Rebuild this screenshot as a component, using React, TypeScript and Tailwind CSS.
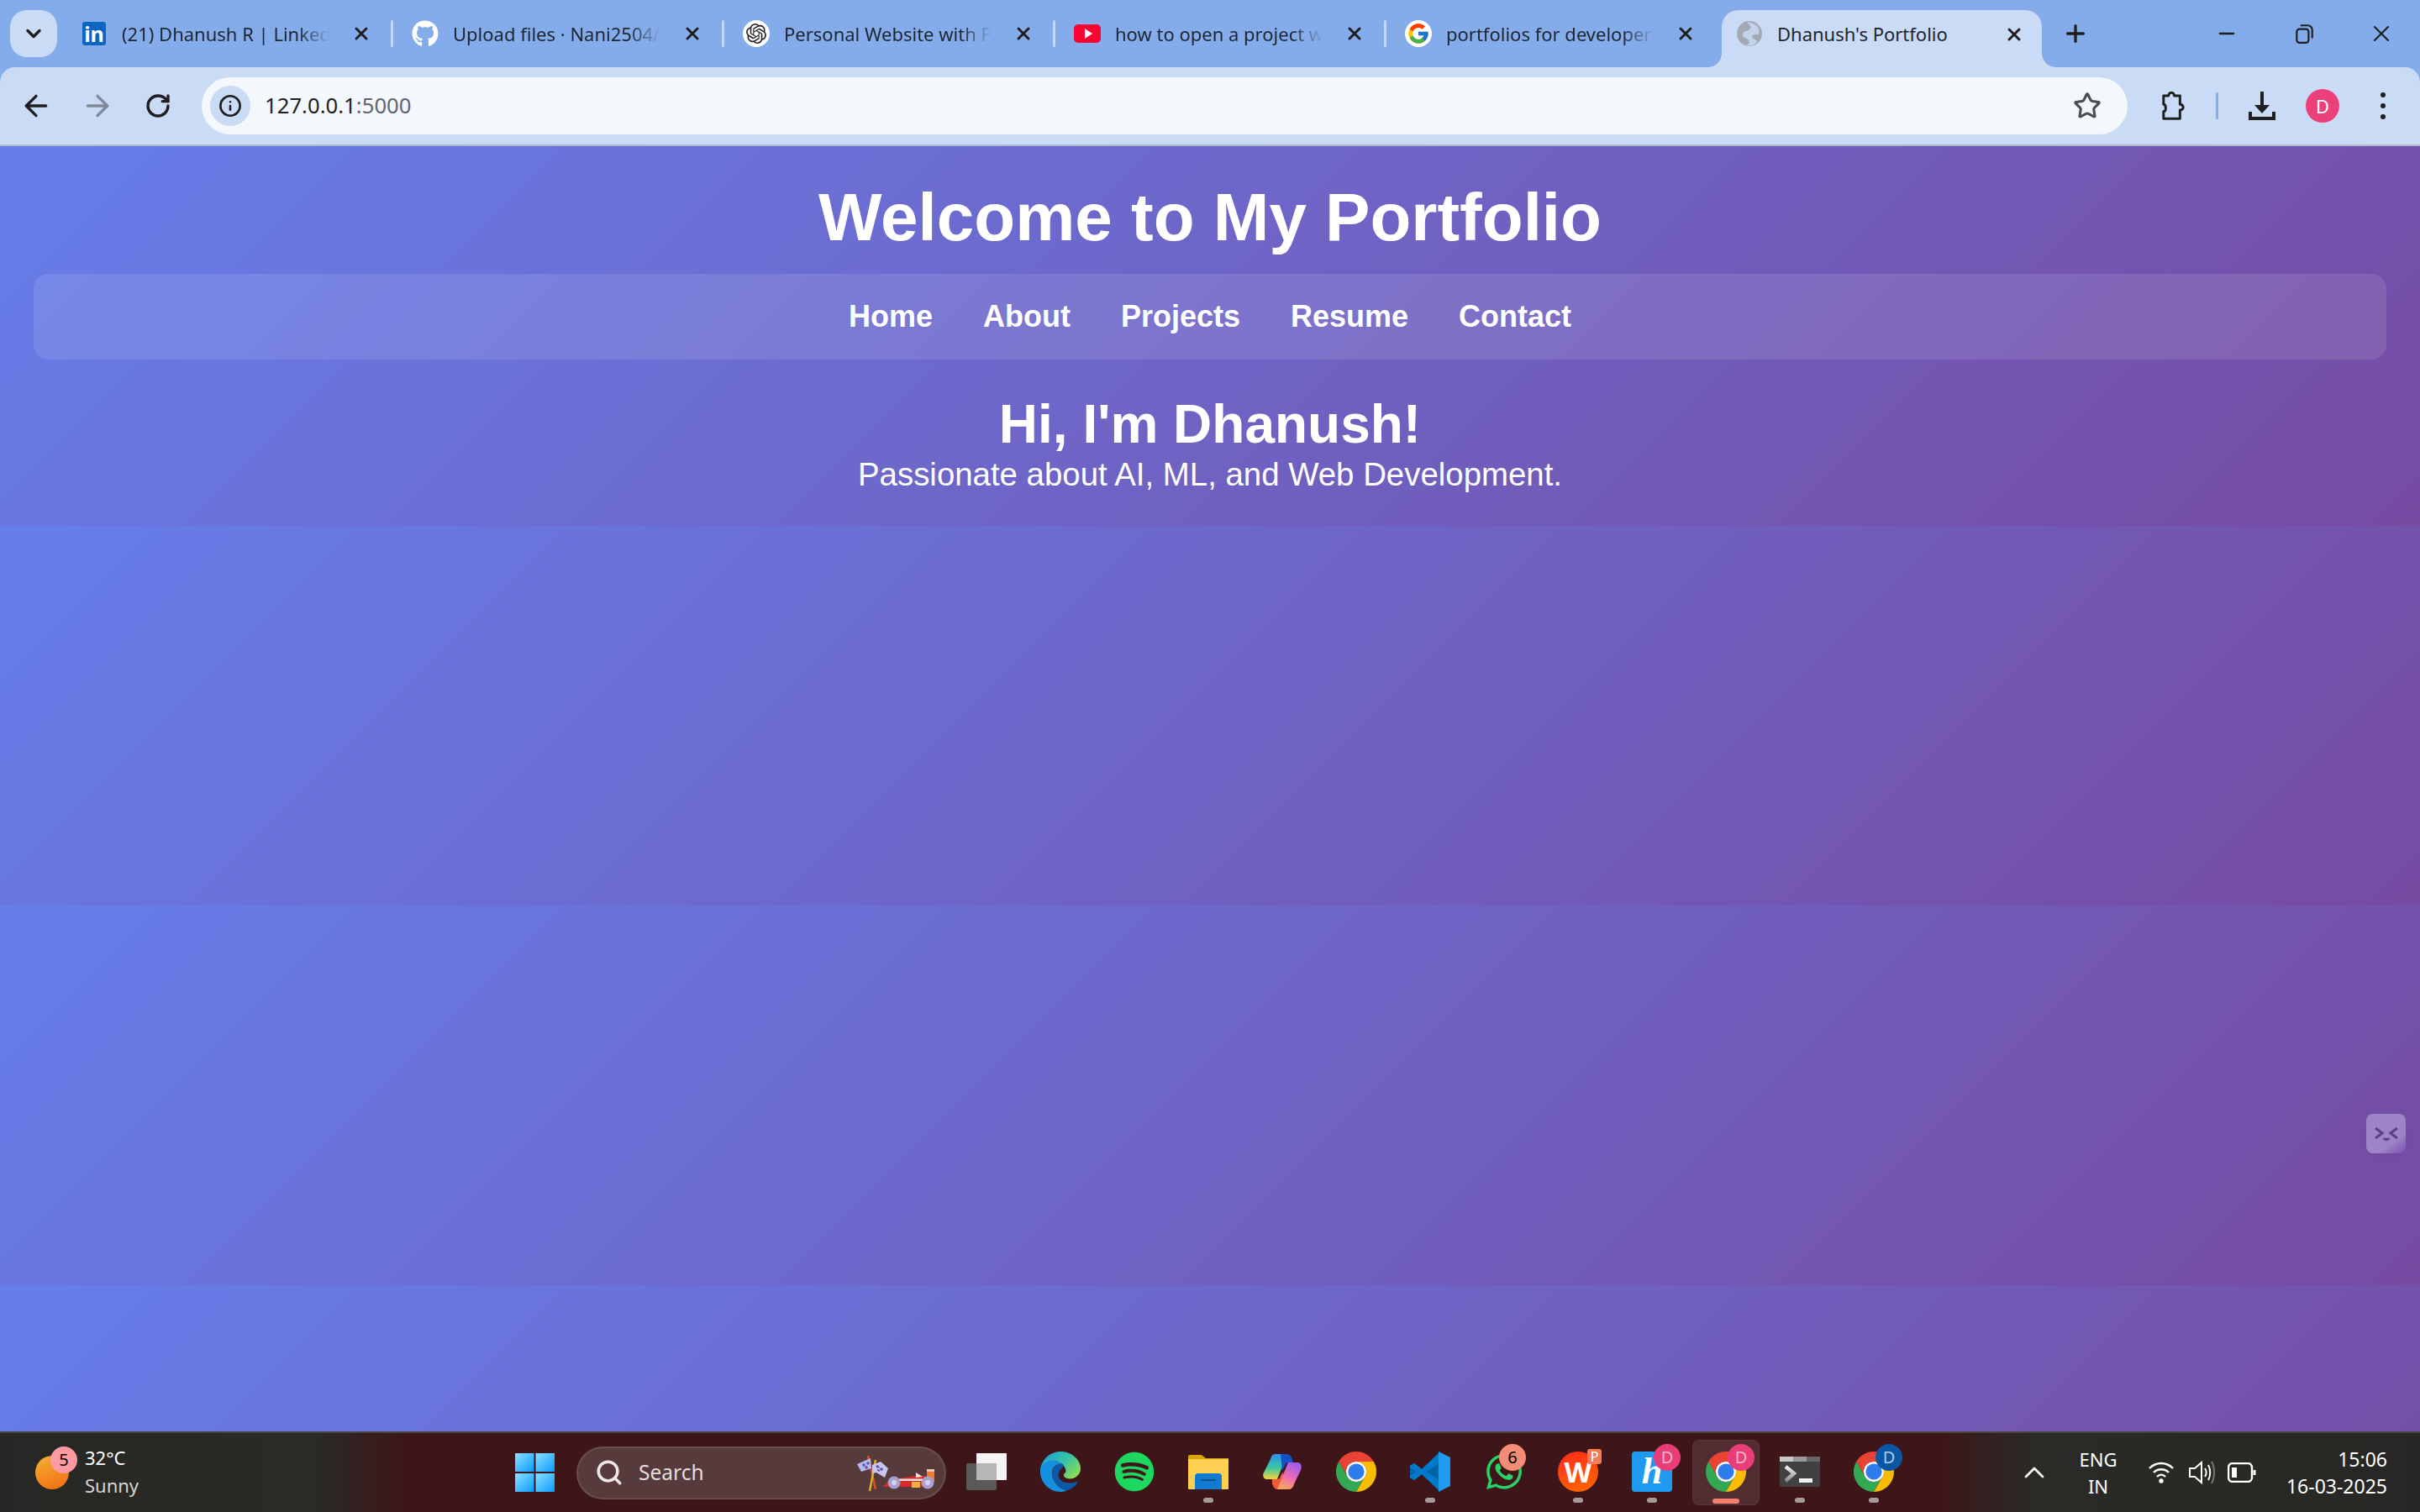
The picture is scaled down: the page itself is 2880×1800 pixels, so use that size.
import type { ReactNode } from 'react';
import { ArrowLeft, ArrowRight, ChevronDown, ChevronUp, Info, Minus, Plus, RotateCw, Search, Star, X } from 'lucide-react';
import { FaGithub, FaSpotify, FaWhatsapp } from 'react-icons/fa';
import { FcGoogle } from 'react-icons/fc';
import { SiOpenai } from 'react-icons/si';

const navLinks = ['Home', 'About', 'Projects', 'Resume', 'Contact'];

function ChromeIcon() {
  return (
    <svg viewBox="4 4 40 40" className="h-12 w-12">
      <path fill="#EA4335" d="M6.68 14A20 20 0 0 1 41.32 14H24A10 10 0 0 0 15.34 29Z" />
      <path fill="#34A853" d="M6.68 14L15.34 29A10 10 0 0 0 32.66 29L24 44A20 20 0 0 1 6.68 14Z" />
      <path fill="#FBBC04" d="M41.32 14H24A10 10 0 0 1 32.66 29L24 44A20 20 0 0 0 41.32 14Z" />
      <circle cx="24" cy="24" r="10" fill="#fff" />
      <circle cx="24" cy="24" r="8" fill="#2F7CEE" />
    </svg>
  );
}

function EdgeIcon() {
  return (
    <svg viewBox="0 0 48 48" className="h-12 w-12">
      <defs>
        <linearGradient id="edge-top" x1="0" y1="0" x2="1" y2="0.7">
          <stop offset="0" stopColor="#1B9DE2" />
          <stop offset="0.55" stopColor="#35C1A8" />
          <stop offset="1" stopColor="#8ADB55" />
        </linearGradient>
      </defs>
      <path fill="url(#edge-top)" d="M0 20C4 6 14 0 24 0C38 0 48 10 48 20C48 30 38 34 32 32C27 31 27 27 30 25C32 22 28 13 17 11C8 11 2 16 0 20Z" />
      <path fill="#1590DE" d="M0 20C2 14 9 10 17 11C24 12 27 15 27 15C19 13 13 20 14 27C15 38 25 46 32 46C28 48 26 48 24 48C10 48 0 36 0 24Z" />
      <path fill="#0C5AA6" d="M27 15C19 13 14 20 14 27C15 38 26 46 32 46C38 45 43 40 45 35C40 38 35 38 30 37C22 35 20 28 23 23C25 20 29 18 27 15Z" />
    </svg>
  );
}

function ExplorerIcon() {
  return (
    <svg viewBox="0 0 48 42" className="h-[42px] w-12">
      <path fill="#D9A300" d="M0 3a2 2 0 0 1 2-2h14l5 4h27v6H0Z" />
      <path fill="#FFD052" d="M0 6h48v35a1 1 0 0 1-1 1H1a1 1 0 0 1-1-1Z" />
      <path fill="#0F7BD1" d="M8 27a4 4 0 0 1 4-4h24a4 4 0 0 1 4 4v15H8Z" />
      <rect x="15" y="30" width="18" height="2" fill="#0A4E8C" />
    </svg>
  );
}

function CopilotIcon() {
  return (
    <svg viewBox="0 0 48 46" className="h-[46px] w-12">
      <defs>
        <linearGradient id="cop-a" x1="0" y1="0" x2="0" y2="1">
          <stop offset="0" stopColor="#2A8DF0" />
          <stop offset="0.55" stopColor="#3CC7A4" />
          <stop offset="1" stopColor="#F7D33A" />
        </linearGradient>
        <linearGradient id="cop-b" x1="0.7" y1="0" x2="0.3" y2="1">
          <stop offset="0" stopColor="#9B5CF0" />
          <stop offset="0.55" stopColor="#EE6DB4" />
          <stop offset="1" stopColor="#F9A65A" />
        </linearGradient>
      </defs>
      <path fill="url(#cop-a)" d="M15 2H30L18 32H6C2 32 0 28 2 24L10 8C11 4 13 2 15 2Z" />
      <path fill="#1450C8" d="M22 2H29C33 2 35 5 36 9L37 12H32C29 12 28 13 27 16L24 22Z" />
      <path fill="#F05A3A" d="M12 32H18C20 32 21 31 22 28L25 23L26 44H18C15 44 13 41 12 37Z" />
      <path fill="url(#cop-b)" d="M31 12H42C46 12 48 16 46 21L38 38C37 42 34 44 32 44H18Z" />
    </svg>
  );
}

function VsCodeIcon() {
  return (
    <svg viewBox="0 0 48 48" className="h-12 w-12">
      <path fill="#0065A9" d="M34 2 14 21 5 14l-5 3v14l5 3 9-7 20 19 3-4V5Z" />
      <path fill="#007ACC" d="M34 2v12L20 24l14 10v12L14 27l-9 7-5-3v-2l8-5-8-5v-2l5-3 9 7Z" />
      <path fill="#1F9CF0" d="M34 0l14 7v34l-14 7Z" />
      <path fill="#0065A9" d="M34 14 20 24l14 10Z" opacity="0.55" />
    </svg>
  );
}

function TerminalIcon() {
  return (
    <svg viewBox="0 0 48 36" className="h-9 w-12">
      <defs>
        <linearGradient id="term-arrow" x1="0" y1="0" x2="0" y2="1">
          <stop offset="0" stopColor="#F0F0F0" />
          <stop offset="1" stopColor="#8C8C8C" />
        </linearGradient>
      </defs>
      <rect width="48" height="36" rx="1" fill="#414141" />
      <rect width="16" height="6" fill="#C8C8C8" />
      <rect x="16" width="16" height="6" fill="#9A9A9A" />
      <rect x="32" width="16" height="6" fill="#666" />
      <path d="M7 12 17 20 7 29" fill="none" stroke="url(#term-arrow)" strokeWidth="4.5" />
      <rect x="23" y="26" width="16" height="5" fill="#F0F0F0" />
    </svg>
  );
}

function RaceCar() {
  return (
    <svg viewBox="0 0 94 48" className="h-12 w-[94px]">
      <path d="M13 4 22 44" stroke="#E0501C" strokeWidth="2.5" fill="none" />
      <path d="M22 9 15 46" stroke="#E3AE22" strokeWidth="2.5" fill="none" />
      <path fill="#B9B9EE" d="M16 7 0 14 5 23 17 19Z" />
      <path fill="#C6C6F0" d="M18 15 28 11 37 19 33 30 23 24 18 25Z" />
      <path fill="#5B5BA8" d="M6 14l3-1 1 3-3 1Zm5-2 3-1 1 3-3 1Zm-2 5 3-1 1 3-3 1ZM22 16l3-1 2 3-3 1Zm5 3 3-1 1 3-3 1Zm-3 1 3 1 0 2-3-1Z" />
      <path fill="#D92A2A" d="M30 41 40 33 68 28 82 28 83 41Z" />
      <path fill="#F4E3E3" d="M50 31.5H80V34H50ZM70 24l8 5-8 1Z" />
      <rect x="65" y="35" width="10" height="7" fill="#F2B33E" />
      <rect x="83" y="20" width="9" height="3" fill="#E7C9B0" />
      <rect x="83" y="23" width="9" height="12" fill="#F0792E" />
      <circle cx="44" cy="36" r="7.5" fill="#A7A1D0" />
      <circle cx="44" cy="36" r="3" fill="#D7D3EC" />
      <circle cx="84" cy="36" r="7.5" fill="#A7A1D0" />
      <circle cx="84" cy="36" r="3" fill="#D7D3EC" />
    </svg>
  );
}

function Tab({ icon, title }: { icon: ReactNode; title: string }) {
  return (
    <div className="flex h-14 w-[394px] shrink-0 items-center pl-[22px]">
      <div className="flex w-8 justify-center">{icon}</div>
      <span className="ml-[17px] w-[247px] overflow-hidden whitespace-nowrap text-[22px] text-[#1f2530] [mask-image:linear-gradient(to_right,black_85%,transparent_100%)]">
        {title}
      </span>
      <X className="ml-[26px] h-6 w-6 text-[#1f1f1f]" strokeWidth={3} />
      {title.startsWith('portfolios') ? null : <div className="ml-auto h-8 w-[3px] rounded-full bg-[#C6D8F5]" />}
    </div>
  );
}

function TabStrip() {
  return (
    <div className="flex h-20 items-start pt-3 pl-3">
      <button className="flex h-14 w-14 items-center justify-center rounded-[20px] bg-[#CADBF6]">
        <ChevronDown className="h-7 w-7 text-[#1f1f1f]" strokeWidth={3} />
      </button>
      <div className="ml-[6px] flex">
        <Tab
          title="(21) Dhanush R | LinkedIn"
          icon={<div className="flex h-7 w-7 items-center justify-center rounded-[3px] bg-[#0A66C2] text-[25px] leading-none font-bold text-white">in</div>}
        />
        <Tab title="Upload files · Nani2504/portfolio" icon={<FaGithub className="h-8 w-8 text-white" />} />
        <Tab
          title="Personal Website with Flask"
          icon={
            <div className="flex h-8 w-8 items-center justify-center rounded-full bg-white">
              <SiOpenai className="h-6 w-6 text-[#222]" />
            </div>
          }
        />
        <Tab
          title="how to open a project with vs code"
          icon={
            <div className="flex h-[22px] w-8 items-center justify-center rounded-[5px] bg-[#FF0033]">
              <div className="ml-[2px] h-0 w-0 border-y-[6px] border-l-[9px] border-y-transparent border-l-white" />
            </div>
          }
        />
        <Tab
          title="portfolios for developers - Google"
          icon={
            <div className="flex h-8 w-8 items-center justify-center rounded-full bg-white">
              <FcGoogle className="h-7 w-7" />
            </div>
          }
        />
      </div>
      <div className="relative ml-[5px] flex h-[68px] w-[381px] shrink-0 items-start rounded-t-[20px] bg-[#CADBF6] pl-[18px]">
        <span className="absolute bottom-0 -left-4 h-4 w-4 bg-[radial-gradient(circle_at_0_0,#84ACEA_15.5px,#CADBF6_16px)]" />
        <span className="absolute -right-4 bottom-0 h-4 w-4 bg-[radial-gradient(circle_at_100%_0,#84ACEA_15.5px,#CADBF6_16px)]" />
        <div className="flex h-14 items-center">
          <svg viewBox="0 0 30 30" className="h-[30px] w-[30px]">
            <circle cx="15" cy="15" r="15" fill="#A3A9B3" />
            <path fill="#CADBF6" d="M12 2c4 3 6 5 3 8s-8 1-8 6 5 3 7 7-1 5-3 6c5 1 10 0 13-4 0-3-5-3-6-6s5-4 8-3c2-5-1-11-7-13-3-1-5-2-7-1Z" opacity="0.85" />
          </svg>
          <span className="ml-[18px] text-[22px] whitespace-nowrap text-[#1f2530]">Dhanush's Portfolio</span>
        </div>
        <X className="absolute top-[17px] right-[21px] h-6 w-6 text-[#1f1f1f]" strokeWidth={3} />
      </div>
      <div className="ml-5 flex h-14 w-10 items-center justify-center">
        <Plus className="h-8 w-8 text-[#1f1f1f]" strokeWidth={2.5} />
      </div>
      <div className="ml-auto flex h-14 items-center">
        <div className="flex w-[92px] justify-center">
          <Minus className="h-7 w-7 text-[#1f1f1f]" strokeWidth={2} />
        </div>
        <div className="flex w-[92px] justify-center">
          <svg viewBox="0 0 24 24" className="h-[26px] w-[26px]" fill="none" stroke="#1f1f1f" strokeWidth="2">
            <rect x="4" y="7" width="13" height="15" rx="3" />
            <path d="M8 3h8a5 5 0 0 1 5 5v9" />
          </svg>
        </div>
        <div className="flex w-[92px] justify-center">
          <X className="h-8 w-8 text-[#1f1f1f]" strokeWidth={1.6} />
        </div>
      </div>
    </div>
  );
}

function Toolbar() {
  return (
    <div className="flex h-[94px] items-start rounded-t-[18px] border-b-2 border-[#ABB8CE] bg-[#CADBF6] pt-3">
      <div className="flex h-[68px] items-center">
        <div className="ml-[23px] flex w-10 justify-center">
          <ArrowLeft className="h-10 w-10 text-[#1f1f1f]" strokeWidth={2} />
        </div>
        <div className="ml-[33px] flex w-10 justify-center">
          <ArrowRight className="h-10 w-10 text-[#7f8a99]" strokeWidth={2} />
        </div>
        <div className="ml-8 flex w-10 justify-center">
          <RotateCw className="h-8 w-8 text-[#1f1f1f]" strokeWidth={2.5} />
        </div>
      </div>
      <div className="ml-[32px] flex h-[68px] w-[2292px] items-center rounded-full bg-[#F4F7FC] pr-[31px] pl-[10px]">
        <div className="flex h-12 w-12 items-center justify-center rounded-full bg-[#CADBF6]">
          <Info className="h-7 w-7 text-[#1f1f1f]" strokeWidth={2.2} />
        </div>
        <span className="ml-[17px] text-[25.7px] text-[#1f1f1f]">
          127.0.0.1<span className="text-[#5f6670]">:5000</span>
        </span>
        <Star className="ml-auto h-[34px] w-[34px] text-[#4a4d52]" strokeWidth={2.2} />
      </div>
      <div className="flex h-[68px] items-center">
        <svg viewBox="0 0 30 40" className="ml-[38px] h-[34px] w-[30px]" fill="none" stroke="#1f1f1f" strokeWidth="3.5" strokeLinejoin="round">
          <path d="M3 6h7c0-6 8-6 8 0h8v12c6 0 6 8 0 8v12H3V28c4 0 4-10 0-10Z" />
        </svg>
        <div className="ml-[37px] h-8 w-[3px] rounded-full bg-[#84ACEA]" />
        <svg viewBox="0 0 32 34" className="ml-[36px] h-[34px] w-8" fill="#1f1f1f">
          <path d="M14 0h4v16h7L16 26 7 16h7Z" />
          <path d="M0 24h4v6h24v-6h4v10H0Z" />
        </svg>
        <div className="ml-[36px] flex h-10 w-10 items-center justify-center rounded-full bg-[#EC407A] text-[22px] text-white">D</div>
        <div className="ml-[49px] flex flex-col gap-[7px]">
          <span className="h-[6px] w-[6px] rounded-full bg-[#1f1f1f]" />
          <span className="h-[6px] w-[6px] rounded-full bg-[#1f1f1f]" />
          <span className="h-[6px] w-[6px] rounded-full bg-[#1f1f1f]" />
        </div>
      </div>
    </div>
  );
}

function PageContent() {
  return (
    <main className="relative min-h-0 flex-1 bg-[linear-gradient(135deg,#667eea_0%,#764ba2_100%)] bg-[length:100%_452px] pt-[39px] text-center font-['Liberation_Sans',sans-serif] text-white">
      <h1 className="text-[80px] leading-[92px] font-bold">Welcome to My Portfolio</h1>
      <nav className="mx-10 mt-[21px] flex h-[102px] items-center justify-center gap-[60px] rounded-[18px] bg-white/10 text-[36px] font-bold">
        {navLinks.map((link) => (
          <a key={link} href={`#${link.toLowerCase()}`}>
            {link}
          </a>
        ))}
      </nav>
      <h2 className="mt-[40px] text-[64px] leading-[74px] font-bold">Hi, I'm Dhanush!</h2>
      <p className="mt-[1px] text-[38.4px] leading-[44px]">Passionate about AI, ML, and Web Development.</p>

      {/* floating widget on the right edge */}
      <div className="absolute top-[1152px] right-[17px] flex h-[47px] w-[47px] items-center justify-center rounded-[8px] bg-[linear-gradient(145deg,#9D84C6_70%,#7B4FB0_100%)] shadow-[0_4px_16px_rgba(0,0,0,0.05)]">
        <svg viewBox="0 0 30 18" className="h-[18px] w-[30px]" fill="none" stroke="#5B3F8C" strokeWidth="3">
          <path d="M2 2l8 6-8 6M28 2l-8 6 8 6M12 14c1 2 5 2 6 0" />
        </svg>
      </div>
    </main>
  );
}

function Badge({ children, className }: { children: ReactNode; className: string }) {
  return <span className={`absolute flex h-8 w-8 items-center justify-center rounded-full text-[20px] ${className}`}>{children}</span>;
}

function AppSlot({ children, dot, active }: { children: ReactNode; dot?: boolean; active?: boolean }) {
  return (
    <div className="relative flex h-full w-[88px] shrink-0 items-center justify-center">
      {active ? <div className="absolute inset-x-[4px] inset-y-[8px] rounded-[8px] border border-white/5 bg-white/10" /> : null}
      <div className="relative mb-[2px] flex h-12 w-12 items-center justify-center">{children}</div>
      {dot ? <span className="absolute bottom-[11px] h-[6px] w-3 rounded-full bg-[#A79A9C]" /> : null}
      {active ? <span className="absolute bottom-[10px] h-[6px] w-8 rounded-full bg-[#F5806E]" /> : null}
    </div>
  );
}

function Taskbar() {
  return (
    <footer className="flex h-24 shrink-0 items-center border-t-2 border-[#4A4640] bg-[linear-gradient(90deg,#272725_0%,#2A2A26_13%,#3E1519_17%,#3E1519_80%,#2A2A26_84%,#272725_100%)] font-['Noto_Sans',sans-serif] text-white">
      <div className="flex w-[613px] shrink-0 items-center pl-[42px]">
        <div className="relative h-10 w-10 rounded-full bg-[linear-gradient(160deg,#F2B233,#F26A12)]">
          <Badge className="-top-[11px] left-[18px] bg-[#FF9AA2] text-black">5</Badge>
        </div>
        <div className="mb-[2px] ml-[19px] text-[22px] leading-[33px]">
          <div>32°C</div>
          <div className="text-[#D8D5D2]">Sunny</div>
        </div>
      </div>
      <svg viewBox="0 0 47 46" className="h-[46px] w-[47px] shrink-0">
        <defs>
          <linearGradient id="win" x1="0" y1="0" x2="1" y2="1">
            <stop offset="0" stopColor="#8BE0FF" />
            <stop offset="1" stopColor="#0A9BFF" />
          </linearGradient>
        </defs>
        <rect width="22.5" height="22" fill="url(#win)" />
        <rect x="24.5" width="22.5" height="22" fill="url(#win)" />
        <rect y="24" width="22.5" height="22" fill="url(#win)" />
        <rect x="24.5" y="24" width="22.5" height="22" fill="url(#win)" />
      </svg>
      <div className="ml-[26px] flex h-[63px] w-[440px] shrink-0 items-center rounded-full border-2 border-white/10 bg-[#573A3C] pr-[10px] pl-[20px]">
        <Search className="h-[34px] w-[34px] text-[#EDE7E7]" strokeWidth={2.5} />
        <span className="ml-[18px] text-[24.5px] text-[#E4DDDD]">Search</span>
        <div className="ml-auto">
          <RaceCar />
        </div>
      </div>
      <div className="ml-1 flex h-full shrink-0">
        <AppSlot>
          <svg viewBox="0 0 48 44" className="h-11 w-12">
            <rect y="12" width="36" height="32" rx="2" fill="#5A5A5A" />
            <rect x="12" width="36" height="32" rx="1" fill="#F4F4F4" />
            <rect x="12" y="12" width="24" height="20" fill="#B8B5B5" />
          </svg>
        </AppSlot>
        <AppSlot>
          <EdgeIcon />
        </AppSlot>
        <AppSlot>
          <FaSpotify className="h-12 w-12 text-[#1ED760]" />
        </AppSlot>
        <AppSlot dot>
          <ExplorerIcon />
        </AppSlot>
        <AppSlot>
          <CopilotIcon />
        </AppSlot>
        <AppSlot>
          <ChromeIcon />
        </AppSlot>
        <AppSlot dot>
          <VsCodeIcon />
        </AppSlot>
        <AppSlot>
          <FaWhatsapp className="h-12 w-12 text-[#25D366]" />
          <Badge className="-top-[9px] left-[18px] bg-[#F28C74] text-black">6</Badge>
        </AppSlot>
        <AppSlot dot>
          <div className="flex h-12 w-12 items-center justify-center rounded-full bg-[linear-gradient(160deg,#FF2A1A,#FF6A00)] text-[34px] font-bold text-white">W</div>
          <span className="absolute -top-[3px] left-[35px] flex h-[18px] w-[17px] items-center justify-center rounded-[3px] bg-[#F47C55] text-[16px] leading-none text-white">P</span>
        </AppSlot>
        <AppSlot dot>
          <div className="flex h-12 w-12 items-center justify-center rounded-[4px] bg-[#1E9BF0] font-['Liberation_Serif',serif] text-[44px] font-bold text-white italic">h</div>
          <Badge className="-top-[9px] left-[26px] bg-[#E83E78] text-[#F7B2CB]">D</Badge>
        </AppSlot>
        <AppSlot active>
          <ChromeIcon />
          <Badge className="-top-[9px] left-[26px] bg-[#E83E78] text-[#F7B2CB]">D</Badge>
        </AppSlot>
        <AppSlot dot>
          <TerminalIcon />
        </AppSlot>
        <AppSlot dot>
          <ChromeIcon />
          <Badge className="-top-[9px] left-[26px] bg-[#0B57A4] text-[#A9CBEF]">D</Badge>
        </AppSlot>
      </div>
      <ChevronUp className="ml-[127px] h-10 w-10 shrink-0" strokeWidth={1.6} />
      <div className="ml-4 w-20 text-center text-[22px] leading-[32px]">
        <div>ENG</div>
        <div>IN</div>
      </div>
      <div className="ml-[13px] flex w-11 justify-center">
        <svg viewBox="0 0 32 28" className="h-7 w-8" fill="none" stroke="#fff" strokeWidth="2.4">
          <path d="M2 9c8-8 20-8 28 0M7 14c5-5 13-5 18 0M11 19c3-3 7-3 10 0" />
          <circle cx="16" cy="24" r="1.5" fill="#fff" />
        </svg>
      </div>
      <div className="ml-1 flex w-11 justify-center">
        <svg viewBox="0 0 32 30" className="h-[30px] w-8" fill="none" stroke="#fff" strokeWidth="2">
          <path d="M2 10h6l8-7v24l-8-7H2Z" />
          <path d="M20 10c2 3 2 7 0 10M24 6c3 5 3 13 0 18" />
          <path d="M28 2c4 7 4 19 0 26" stroke="#777" />
        </svg>
      </div>
      <div className="ml-1 flex w-11 justify-center">
        <svg viewBox="0 0 34 24" className="h-6 w-[34px]" fill="none" stroke="#fff" strokeWidth="2.4">
          <rect x="1" y="1" width="28" height="22" rx="5" />
          <rect x="5" y="6" width="6" height="12" fill="#fff" stroke="none" />
          <path d="M32 9v6" strokeWidth="3" />
        </svg>
      </div>
      <div className="mr-[39px] ml-auto text-right text-[23px] leading-[32px]">
        <div>15:06</div>
        <div>16-03-2025</div>
      </div>
    </footer>
  );
}

export default function App() {
  return (
    <div className="flex h-[1800px] w-[2880px] flex-col overflow-hidden bg-[#84ACEA] font-['Noto_Sans',sans-serif]">
      <TabStrip />
      <Toolbar />
      <PageContent />
      <Taskbar />
    </div>
  );
}
